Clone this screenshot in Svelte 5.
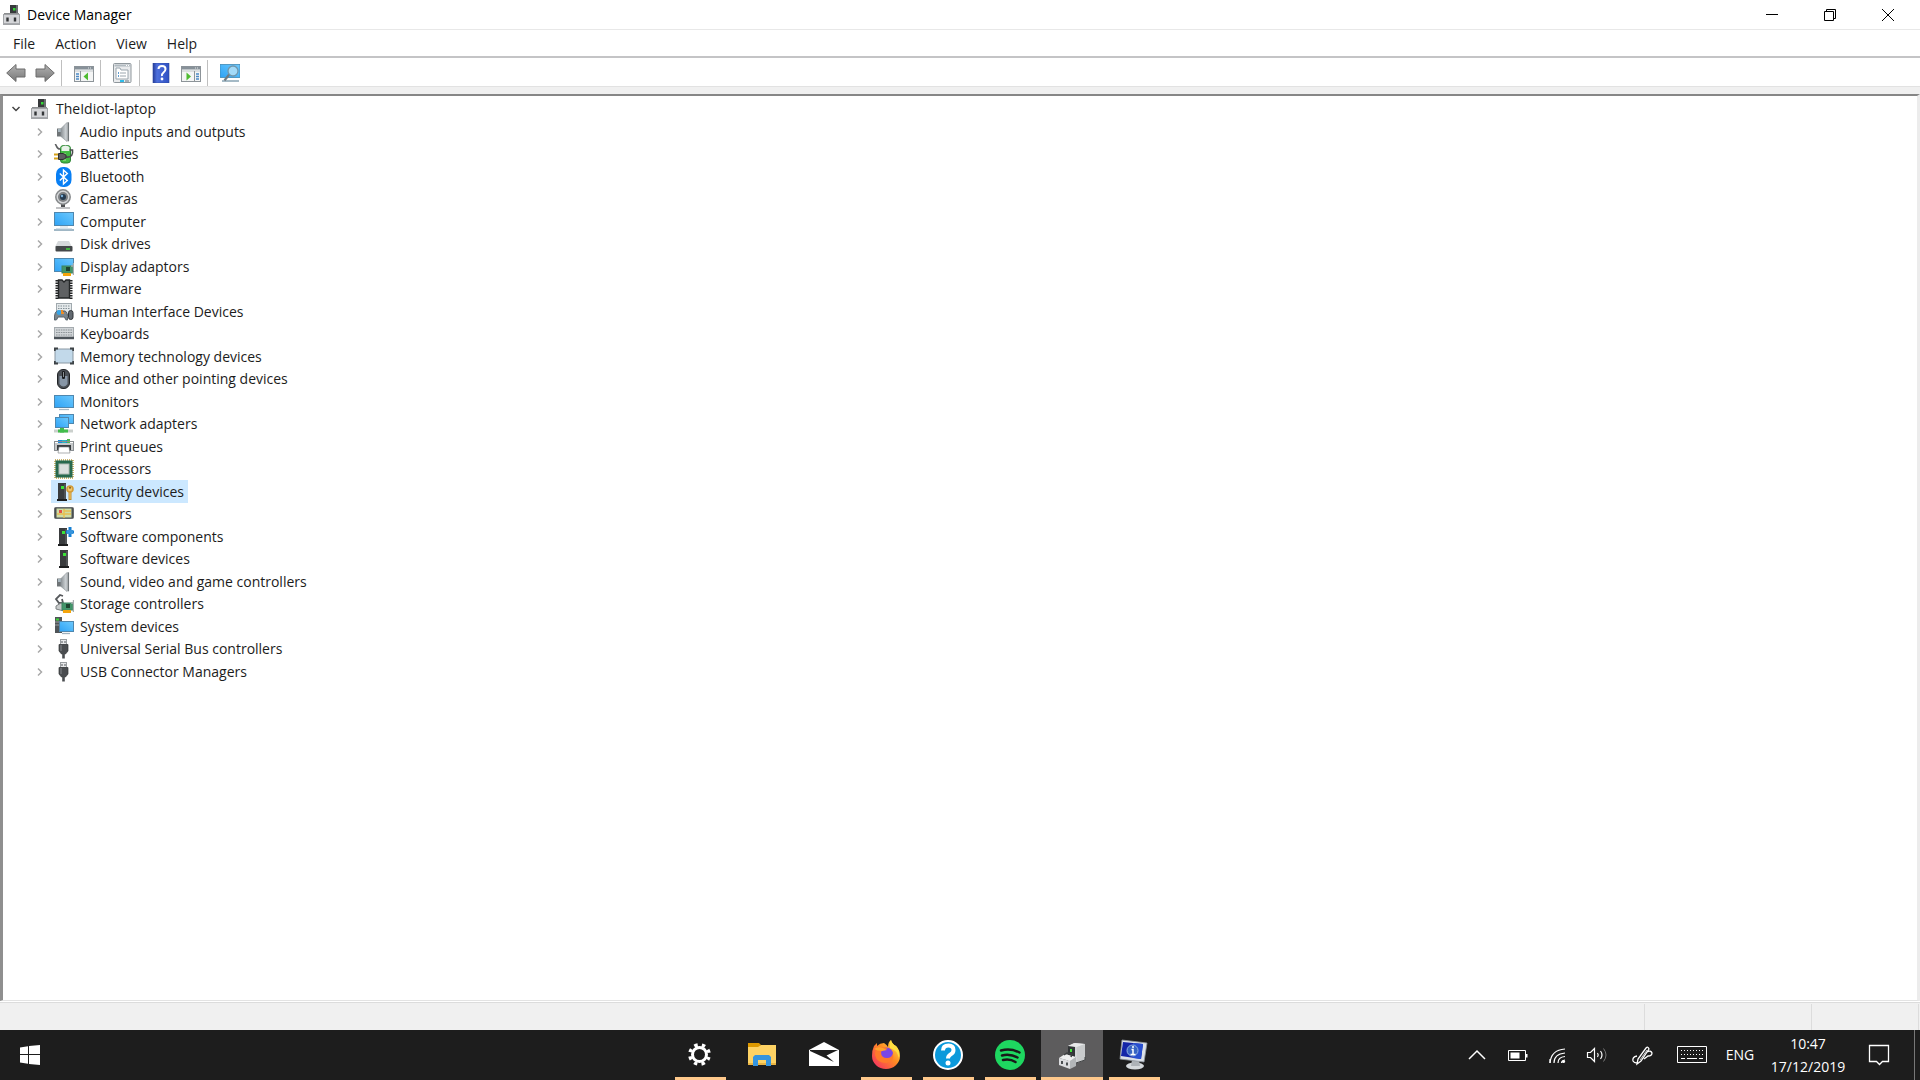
<script>
  const menus = ['File', 'Action', 'View', 'Help'];

  const devices = [
    ['Audio inputs and outputs', 'speaker'],
    ['Batteries', 'battery'],
    ['Bluetooth', 'bluetooth'],
    ['Cameras', 'camera'],
    ['Computer', 'computer'],
    ['Disk drives', 'disk'],
    ['Display adaptors', 'display'],
    ['Firmware', 'firmware'],
    ['Human Interface Devices', 'hid'],
    ['Keyboards', 'keyboard'],
    ['Memory technology devices', 'memory'],
    ['Mice and other pointing devices', 'mouse'],
    ['Monitors', 'monitor'],
    ['Network adapters', 'network'],
    ['Print queues', 'printer'],
    ['Processors', 'cpu'],
    ['Security devices', 'security'],
    ['Sensors', 'sensors'],
    ['Software components', 'component'],
    ['Software devices', 'software'],
    ['Sound, video and game controllers', 'speaker'],
    ['Storage controllers', 'storage'],
    ['System devices', 'system'],
    ['Universal Serial Bus controllers', 'usb'],
    ['USB Connector Managers', 'usb']
  ];

  const apps = [
    { name: 'Settings', icon: 'gear', open: true },
    { name: 'File Explorer', icon: 'folder' },
    { name: 'Mail', icon: 'mail' },
    { name: 'Firefox', icon: 'firefox', open: true },
    { name: 'Get Help', icon: 'question', open: true },
    { name: 'Spotify', icon: 'spotify', open: true },
    { name: 'Device Manager', icon: 'manager', open: true, active: true },
    { name: 'System Information', icon: 'sysinfo', open: true }
  ];

  let selected = $state('Security devices');
</script>

<svelte:head><title>Device Manager</title></svelte:head>

{#snippet screen(x, y, w, h)}
  <rect x={x + 0.5} y={y + 0.5} width={w - 1} height={h - 1} fill="url(#screenBlue)" stroke="#4f87ae" />
{/snippet}

{#snippet tower(x, y, h)}
  <rect {x} {y} width="8" height={h - 1} fill="#3a3c3e" />
  <rect x={x + 6} y={y + 1} width="2" height={h - 3} fill="#505355" />
  <rect x={x + 3} y={y + 3} width="3" height="3" fill="#3be337" />
  <rect x={x - 1} y={y + h - 2} width="10" height="2" fill="#1e1f20" />
{/snippet}

{#snippet board()}
  <rect x="8" y="9" width="11" height="7" fill="#42956a" stroke="#3c8460" />
  <rect x="12" y="10" width="4" height="4" fill="#1d4430" />
  <path d="M19.500 6v12M17 9h3" stroke="#a7adb0" stroke-width="1.400" />
  <path d="M9 17.500h8" stroke="#f4a40c" stroke-width="3" />
{/snippet}

{#snippet icon(name)}
  <svg class="icon" viewBox="0 0 20 20" aria-hidden="true">
    {#if name === 'root'}
      <rect x="7" y="0" width="8" height="11" fill="#37393b" />
      <rect x="13" y="0" width="2" height="11" fill="#6b6e70" />
      <rect x="10" y="3" width="2.500" height="2.500" fill="#35d838" />
      <path d="M1 8h15v3H1z" fill="#8c8e90" />
      <rect x="0.500" y="9.500" width="16" height="10" fill="#d4d5d8" stroke="#a2a4a7" />
      <path d="M4.500 12.500v4M12 12.500v4" stroke="#343638" stroke-width="2.400" />
      <path d="M1 18.500h15" stroke="#a8aaae" />
    {:else if name === 'speaker'}
      <path d="M3 6.500h5v8H3z" fill="#6f7477" />
      <path d="M4 7h3v3H4z" fill="#a7b5bd" />
      <path d="M7 6.500 13 .5v19l-6-5z" fill="url(#metal)" stroke="#92999e" stroke-width=".7" />
      <path d="M14.300.300v19" stroke="#707679" stroke-width="1.500" />
    {:else if name === 'battery'}
      <rect x="6.500" y="1.500" width="10" height="17.500" rx="3" fill="#43b944" stroke="#2c8233" />
      <path d="M7.500 3q4-3 8 0v4h-8z" fill="#e9f2e9" />
      <path d="M9 9h3v8H9z" fill="#7ad06d" />
      <path d="M1 0c2 1 1 5 5 5" fill="none" stroke="#5c5e60" stroke-width="1.500" />
      <path d="M12 13c6 1 7-3 6.500-7h-3" fill="none" stroke="#4a4c4e" stroke-width="1.600" />
      <path d="M4.500 9.500H9l3 1.500v3l-3 1.500H4.500z" fill="#5c5e60" stroke="#2e3032" />
      <path d="M0 10.500h4M0 14.500h4" stroke="#d6a21b" stroke-width="2" />
    {:else if name === 'bluetooth'}
      <rect x="2" y="0" width="15.500" height="20" rx="7" fill="#087ff4" />
      <path d="m5.800 6.500 7.500 7-3.800 3.500V3l3.800 3.500-7.500 7" fill="none" stroke="#fff" stroke-width="1.400" />
    {:else if name === 'camera'}
      <path d="M9 15v3" stroke="#4e5052" stroke-width="4" />
      <path d="M2 19h14" stroke="#abadaf" stroke-width="1.500" />
      <circle cx="9" cy="8" r="7.200" fill="#d4d6d8" stroke="#85888a" stroke-width="1.500" />
      <circle cx="9" cy="8" r="5" fill="#7d8083" />
      <circle cx="9" cy="8" r="3" fill="#243a50" />
      <circle cx="8" cy="7" r="1.200" fill="#7cb2dc" />
    {:else if name === 'computer'}
      {@render screen(0, 0, 20, 14)}
      <path d="M6 14.500h8v1H6z" fill="#cad6df" />
      <path d="M0 18h20" stroke="#89a5b7" stroke-width="1.600" />
      <path d="M2 16.700h16" stroke="#c9dbe5" />
    {:else if name === 'disk'}
      <path d="m4 7h11l3 6H1z" fill="#d6d9db" />
      <rect x="1.500" y="12" width="17" height="5.500" rx="1" fill="#45484a" />
      <path d="M12 15h4" stroke="#42d33e" stroke-width="1.500" />
    {:else if name === 'display'}
      {@render screen(0, 1, 20, 14)}
      {@render board()}
    {:else if name === 'firmware'}
      <path d="M3 1v19M17 1v19" stroke="#212324" stroke-width="3" stroke-dasharray="1.500 1" />
      <path d="M4.500 1H8l2 2 2-2h3.500v18h-11z" fill="#5f6163" stroke="#252728" stroke-width="1.400" />
    {:else if name === 'hid'}
      <rect x="2.500" y="1.500" width="15" height="11" fill="#e4e9eb" stroke="#a0a9ae" />
      <path d="M4 4h12M4 6.500h12" stroke="#849096" stroke-dasharray="1.500 1" />
      <path d="M4 9h7q3 1 2.500 9-2 1-3-3H4q-1 4-3.500 3Q0 9 4 9z" fill="#7b878e" stroke="#58626a" />
      <circle cx="5" cy="10.500" r="2.400" fill="#38a5e7" />
      <path d="M8 8v3h2" stroke="#ed8d27" stroke-width="2" />
      <rect x="14.500" y="8.500" width="4.500" height="9" rx="2.200" fill="#626970" stroke="#303438" />
    {:else if name === 'keyboard'}
      <rect x="0.500" y="3.500" width="19" height="10" fill="#d1d5d8" stroke="#a5abaf" />
      <path d="M2 6h16M2 8.500h16M2 11h16" stroke="#8c9397" stroke-dasharray="1.600 .8" />
      <path d="M0 14h20" stroke="#4c5359" stroke-width="2.500" />
    {:else if name === 'memory'}
      <rect x="1" y="2" width="18" height="14" rx="1" fill="#c2d9ea" stroke="#8a98a3" />
      <path d="M.7 4V1.500H4M16 1.500h3.300V4M.7 14v2.500H4M16 16.500h3.300V14" fill="none" stroke="#3d4246" stroke-width="2" />
    {:else if name === 'mouse'}
      <rect x="3.500" y="0.500" width="12" height="19" rx="5.500" fill="#4b5056" stroke="#202326" />
      <path d="M5.500 7v8q4 5 8 0V7" fill="#8796a6" />
      <rect x="8" y="2" width="3" height="8" rx="1.300" fill="#191b1d" />
      <path d="M9.500 3v5" stroke="#8a9094" />
    {:else if name === 'monitor'}
      {@render screen(0, 3, 20, 13)}
      <path d="M5 17.500h10" stroke="#a8b9c4" stroke-width="1.300" />
    {:else if name === 'network'}
      {@render screen(5, 0, 15, 10)}
      {@render screen(1, 3, 14, 11)}
      <path d="M0 17h19" stroke="#cbd0cd" stroke-width="3" />
      <path d="M8 14v4.500" stroke="#41bd4b" stroke-width="4" />
      <path d="M4 17h10" stroke="#41bd4b" stroke-width="3" />
    {:else if name === 'printer'}
      <path d="M4 3h12v5H4z" fill="#188ae0" />
      <path d="M8 3h4v5H8z" fill="#28bac1" />
      <path d="M13 2h3v5h-3z" fill="#51b950" />
      <rect x="0.500" y="4.500" width="19" height="9" fill="none" stroke="#898e92" />
      <path d="M1 6h18v7H1z" fill="#c5c8ca" />
      <path d="M3 8h14v5H3z" fill="#3a3e41" />
      <path d="M5 10h10l1 6H4z" fill="#fff" stroke="#777b7e" stroke-width=".6" />
    {:else if name === 'cpu'}
      <rect x="1" y="1" width="18" height="18" fill="none" stroke="#cbb46b" stroke-width="2" stroke-dasharray="1 1" />
      <rect x="1.500" y="1.500" width="17" height="17" fill="#28694e" />
      <rect x="5" y="5" width="10" height="10" fill="#dce0de" stroke="#b0bbb3" />
    {:else if name === 'security'}
      {@render tower(4, 1, 18)}
      <path d="M16 8v10" stroke="#c08c2c" stroke-width="3" />
      <path d="M16 8v9" stroke="#e7b652" stroke-width="1.600" />
      <circle cx="16" cy="7" r="3" fill="#f0c66b" stroke="#d39b38" stroke-width="1.600" />
      <circle cx="16" cy="5.800" r="1" fill="#865f1e" />
    {:else if name === 'sensors'}
      <rect x="0.500" y="3.500" width="19" height="11" rx="1" fill="#4b4e50" stroke="#686c6f" />
      <rect x="2.500" y="4.500" width="15" height="9" fill="#cedca8" />
      <path d="M3 10h14M10 5v9M10 7h7" stroke="#e8bf50" stroke-width="1.400" />
      <path d="M5 6h3v3H5z" fill="#e45249" />
    {:else if name === 'component'}
      {@render tower(5, 1, 18)}
      <path d="M16 0v10M12 5h8" stroke="#1680d4" stroke-width="3" />
      <path d="M13 3h6v4h-6z" fill="#3794db" />
    {:else if name === 'software'}
      {@render tower(6, 1, 18)}
    {:else if name === 'storage'}
      <path d="M9 2 6 1 2 5l3 4h4L8 5" fill="none" stroke="#56595c" stroke-width="1.800" />
      <path d="m2 12 5-3 6 2-3 6-8-2z" fill="#c7caca" stroke="#7d8283" />
      {@render board()}
    {:else if name === 'system'}
      <path d="M1 0h7v16H1z" fill="#505558" />
      <path d="M1 5h7M1 8h7" stroke="#9ba0a2" />
      <rect x="2" y="1.500" width="3" height="2" fill="#3bd636" />
      {@render screen(5, 4, 15, 11)}
      <path d="M8 16.500h8" stroke="#9fb1be" stroke-width="1.300" />
    {:else if name === 'usb'}
      <rect x="6.500" y="0.500" width="6" height="5" fill="#e7e8e9" stroke="#999da0" />
      <path d="M8 2v2M11 2v2" stroke="#53575a" />
      <path d="M5 5.500h9V12l-2.500 3h-4L5 12z" fill="#4a4d50" stroke="#343638" stroke-width=".7" />
      <path d="M7 6v6" stroke="#85898c" />
      <path d="M9.500 14v5.500" stroke="#4a4d50" stroke-width="2.600" />
    {/if}
  </svg>
{/snippet}

{#snippet toolPanel(forward)}
  <svg class="icon" viewBox="0 0 20 20" aria-hidden="true">
    <rect x="0.500" y="3.500" width="19" height="15" fill="#f4f5f5" stroke="#8d9499" />
    <path d="M1 5h18" stroke="#879199" stroke-width="3" />
    <path d="M14 5h4" stroke="#e2e6e8" stroke-dasharray="1 1" />
    <path d="M1 8h18" stroke="#c3c8cc" />
    {#if forward}
      <path d="M13.500 8v10" stroke="#8d9499" />
      <path d="M15 11h3M15 13.500h3M15 16h3" stroke="#4b89c5" stroke-width="1.300" />
      <path d="m5.500 9.500 4.500 4-4.500 4z" fill="#4fbc32" />
    {:else}
      <path d="M6.500 8v10" stroke="#8d9499" />
      <path d="M2 11h3M2 13.500h3M2 16h3" stroke="#4b89c5" stroke-width="1.300" />
      <path d="m14 9.500-4.500 4 4.500 4z" fill="#4fbc32" />
    {/if}
  </svg>
{/snippet}

{#snippet appIcon(name)}
  <svg class="app-icon" viewBox="0 0 32 32" aria-hidden="true">
    {#if name === 'gear'}
      <circle cx="15.500" cy="15.500" r="9.700" fill="none" stroke="#fff" stroke-width="3.400" stroke-dasharray="3.500 4.118" stroke-dashoffset="1.750" transform="rotate(22.500 15.500 15.500)" />
      <circle cx="15.500" cy="15.500" r="7" fill="none" stroke="#fff" stroke-width="3" />
    {:else if name === 'folder'}
      <path d="M2 4h11l2 2-2 3H2z" fill="#dc9800" />
      <path d="M2 8h10l3-2h15v20H2z" fill="#fdd264" />
      <path d="M2 24h28v2H2z" fill="#e9b443" />
      <path d="M9 16h14l2 2v9h-5v-6h-8v6H7v-9z" fill="#3494df" />
    {:else if name === 'mail'}
      <path d="M1 11 16 3l15 8v16H1z" fill="#fff" />
      <path d="M2 11h28L18.500 16.500 26 23 2 12z" fill="#1d1d1d" />
    {:else if name === 'firefox'}
      <path d="M4 7 7 4v3q3-3 7-3 3 2 4 4Q18 3 21 1q1 4 5 6 4 4 4 10A14 13 0 0 1 2 17Q2 11 4 7z" fill="url(#fox)" />
      <circle cx="16.500" cy="15" r="6.500" fill="#7946e8" />
      <path d="M10 9q4-2 8 1-5 0-7 3 0 6 6 6 5 0 6-5 2 9-7 10-9 0-11-8Q5 9 10 9z" fill="#ff7a2b" />
      <path d="M21 1q1 4 5 6 4 4 3 12-2-8-9-10-1-5 1-8z" fill="#ffdf40" />
      <path d="M4 10q4-3 9-1l4 2-5 1q-5 0-8-2z" fill="#ffa22c" />
    {:else if name === 'question'}
      <circle cx="16" cy="16" r="14" fill="#0b99db" stroke="#fff" stroke-width="2" />
      <path d="M11 11.500q0-5 5.500-5 5 0 5 4.500 0 3-3 4.500-2.500 1.500-2.500 4" fill="none" stroke="#fff" stroke-width="4" />
      <circle cx="16" cy="24" r="2.500" fill="#fff" />
    {:else if name === 'spotify'}
      <circle cx="16" cy="16" r="15" fill="#1ed760" />
      <path d="M7 11.500q10-2.500 18.500 2M8 16.500q8-2 15.500 2M9 21q7-1.500 12.500 2" fill="none" stroke="#191919" stroke-width="2.500" stroke-linecap="round" />
    {:else if name === 'manager'}
      <path d="m12 7 6-3 11 1v16l-9 3-8-2z" fill="#d2d4d5" />
      <path d="m12 7 7-3 10 1-8 3z" fill="#e8e9e9" />
      <path d="m21 8 8-3v16l-8 3z" fill="#c9cbcc" />
      <path d="m12 7 7 1v10l-7-1z" fill="#323537" />
      <path d="M14 10h2v3h-2z" fill="#42e039" />
      <path d="m20 24 9-3v-3" fill="none" stroke="#434647" />
      <path d="m3 19 6-4 11 3-6 4z" fill="#efefef" />
      <path d="m3 19 11 3v8L3 26z" fill="#dcdddf" />
      <path d="m14 22 6-4v9l-6 3z" fill="#b3b6b8" />
      <path d="M6 22v3M11 23.500v3" stroke="#4d5052" stroke-width="2" />
      <path d="m8 16 3-2 5 1-1 3" fill="none" stroke="#3c3f40" stroke-width="1.500" />
    {:else if name === 'sysinfo'}
      <ellipse cx="17" cy="27" rx="9" ry="3.500" fill="#d5d9dc" />
      <path d="M14 21h7l1 6h-9z" fill="#aeb3b8" />
      <path d="m4 1 25 3-3 19-24-3z" fill="#dce1e8" stroke="#8e959d" stroke-width=".8" />
      <path d="m5 3 20 2-2 15-20-3z" fill="#1426a8" />
      <path d="m15 4 10 1-2 15-8-1z" fill="#274fd0" />
      <circle cx="14.500" cy="11.500" r="5.500" fill="#3764c2" stroke="#8fafe1" />
      <path d="M13.500 10.500H15v5M12.500 15.500h5M15 7v2" fill="none" stroke="#fff" stroke-width="1.500" />
    {/if}
  </svg>
{/snippet}

<svg class="defs" aria-hidden="true">
  <defs>
    <linearGradient id="screenBlue" x1="0" y1="1" x2="1" y2="0">
      <stop offset="0" stop-color="#2fa2f5" />
      <stop offset=".55" stop-color="#4fb8fa" />
      <stop offset="1" stop-color="#6fc8fc" />
    </linearGradient>
    <linearGradient id="metal">
      <stop offset="0" stop-color="#8b9296" />
      <stop offset="1" stop-color="#dde1e4" />
    </linearGradient>
    <linearGradient id="fox" x1="1" y1="0" x2="0" y2="1">
      <stop offset="0" stop-color="#fff04b" />
      <stop offset=".45" stop-color="#ff8b22" />
      <stop offset="1" stop-color="#f4236c" />
    </linearGradient>
    <linearGradient id="arrowGray" x1="0" y1="0" x2="0" y2="1">
      <stop offset="0" stop-color="#b2b2b2" />
      <stop offset="1" stop-color="#777" />
    </linearGradient>
    <linearGradient id="bookBlue">
      <stop offset="0" stop-color="#263d9c" />
      <stop offset=".25" stop-color="#4d6fdc" />
      <stop offset="1" stop-color="#2f51c3" />
    </linearGradient>
  </defs>
</svg>

<div class="desktop">
  <main class="window">
    <header class="title-bar">
      {@render icon('root')}
      <h1>Device Manager</h1>
      <div class="window-buttons">
        <button aria-label="Minimise"><svg viewBox="0 0 12 12"><path d="M0 5.500h12" /></svg></button>
        <button aria-label="Restore"><svg viewBox="0 0 12 12"><path d="M.5 2.500h9v9h-9zM2.500 2.500v-2h9v9h-2" /></svg></button>
        <button aria-label="Close"><svg viewBox="0 0 12 12"><path d="m0 0 12 12M12 0 0 12" /></svg></button>
      </div>
    </header>

    <nav class="menu-bar" aria-label="Menu">
      {#each menus as menu}
        <button>{menu}</button>
      {/each}
    </nav>

    <div class="toolbar" role="toolbar" aria-label="Tools">
      <button aria-label="Back">
        <svg class="icon" viewBox="0 0 20 20"><path d="M.7 10 10 1.500V6h9v8h-9v4.500z" fill="url(#arrowGray)" stroke="#6d6d6d" /></svg>
      </button>
      <button aria-label="Forward">
        <svg class="icon" viewBox="0 0 20 20"><path d="M19.300 10 10 1.500V6H1v8h9v4.500z" fill="url(#arrowGray)" stroke="#6d6d6d" /></svg>
      </button>
      <span class="separator"></span>
      <button aria-label="Show console tree">{@render toolPanel(false)}</button>
      <span class="separator"></span>
      <button aria-label="Properties">
        <svg class="icon" viewBox="0 0 20 20">
          <rect x="0.500" y=".5" width="17.500" height="19" rx="1" fill="#e9ebed" stroke="#8f979c" />
          <path d="M1.500 2.500h16" stroke="#b2bbc1" stroke-width="2" />
          <path d="M13 2.500h3" stroke="#fff" stroke-dasharray="1 1" />
          <path d="M3 5h4l1 2h7v9H3z" fill="#fff" stroke="#9aa5ad" />
          <path d="M5 10h1M5 13h1" stroke="#2d7cc0" stroke-width="1.500" />
          <path d="M7 10h6M7 13h6" stroke="#9ba6ae" />
          <path d="M7 18h4" stroke="#2ebbe8" stroke-width="2" />
          <path d="M12 18h4" stroke="#a8b0b5" stroke-width="2" />
        </svg>
      </button>
      <span class="separator"></span>
      <button aria-label="Help">
        <svg class="icon" viewBox="0 0 20 20">
          <rect x="1" y="0" width="16" height="20" fill="url(#bookBlue)" stroke="#2d469c" stroke-width=".6" />
          <path d="M6.500 6q0-3 3.500-3t3.500 3q0 2-2 3.500T10 13" fill="none" stroke="#fff" stroke-width="2" />
          <circle cx="10" cy="16" r="1.400" fill="#fff" />
        </svg>
      </button>
      <button aria-label="Show action pane">{@render toolPanel(true)}</button>
      <span class="separator"></span>
      <button aria-label="Scan for hardware changes">
        <svg class="icon" viewBox="0 0 20 20">
          <rect x="0" y="1.500" width="20" height="13" fill="url(#screenBlue)" stroke="#4089b4" stroke-width=".8" />
          <path d="M2 18h17" stroke="#8fa9b8" stroke-width="1.600" />
          <path d="m9.500 11-5 6.500" stroke="#707b83" stroke-width="2.200" />
          <circle cx="13" cy="8" r="5" fill="#a3daf8" stroke="#7197ac" stroke-width="1.300" />
        </svg>
      </button>
    </div>

    <section class="tree-pane">
      <ul class="tree" aria-label="Devices">
        <li class="row root">
          <button class="chevron" aria-label="Collapse TheIdiot-laptop">
            <svg viewBox="0 0 10 10"><path d="m1.500 3 3.500 3.500L8.500 3" stroke="#444" /></svg>
          </button>
          <button class="item">{@render icon('root')}<span>TheIdiot-laptop</span></button>
        </li>
        {#each devices as [name, glyph]}
          <li class="row">
            <button class="chevron" aria-label={`Expand ${name}`}>
              <svg viewBox="0 0 10 10"><path d="m3 1.500 3.500 3.500L3 8.500" stroke="#a9a9a9" /></svg>
            </button>
            <button class="item" class:selected={name === selected} onclick={() => (selected = name)}>
              {@render icon(glyph)}<span>{name}</span>
            </button>
          </li>
        {/each}
      </ul>
    </section>

    <footer class="status-bar"><span></span><span></span><span></span></footer>
  </main>

  <nav class="taskbar" aria-label="Taskbar">
    <button class="start" aria-label="Start">
      <svg viewBox="0 0 20 20"><path d="M0 2.500 8 1.300V9H0zM9 1.100 20 0v9H9zM0 10h8v8.700L0 17.500zM9 10h11v10L9 18.900z" fill="#fff" /></svg>
    </button>
    <span class="space-before"></span>
    <div class="apps">
      {#each apps as app}
        <button class="app" class:open={app.open} class:active={app.active} aria-label={app.name}>
          {@render appIcon(app.icon)}
        </button>
      {/each}
    </div>
    <span class="space-after"></span>
    <div class="tray">
      <button aria-label="Show hidden icons">
        <svg viewBox="0 0 24 24"><path d="m4 16 8-8 8 8" stroke-width="1.500" /></svg>
      </button>
      <button aria-label="Battery">
        <svg viewBox="0 0 24 24"><path d="M3.500 7.500h17v10h-17z" /><path d="M5.500 9.500h9v6h-9z" fill="#fff" stroke="none" /><path d="M21.500 11v3.500" stroke-width="2" /></svg>
      </button>
      <button aria-label="Network">
        <svg viewBox="0 0 24 24"><path d="M5 20Q6 7 20 6M9 20q0-9 11-10M13 20q0-6 7-6.500" stroke-width="1.200" /><path d="M5 20v-4M16.500 20q0-2.500 3.500-3" stroke-width="1.200" /><circle cx="18.500" cy="18.500" r="1.600" fill="#fff" stroke="none" /></svg>
      </button>
      <button aria-label="Volume">
        <svg viewBox="0 0 24 24"><path d="M2.500 9.500h3l4-4v13l-4-4h-3zM12.500 10q1.500 2 0 4M15.500 8q3 4 0 8" stroke-width="1.200" /><path d="M18.500 5.500q5 6.500 0 13" stroke="#777" /></svg>
      </button>
      <button class="wide" aria-label="Windows Ink Workspace">
        <svg viewBox="0 0 24 24"><path d="m7 21 1-5 8-11q2-2 3 1l-8 12zM7 13q-5 1-4 5 1 2 4 2M17 9q4-2 5 1 0 3-4 3l-4 3" stroke-width="1.300" /><path d="m10 17 7-10" stroke-width=".8" /></svg>
      </button>
      <button class="wide" aria-label="Touch keyboard">
        <svg class="keys" viewBox="0 0 30 18"><path d="M.5.5h29v16H.5z" /><path d="M4 4.500h23M4 8.500h23" stroke-dasharray="1 2" /><path d="M4 12.500h4M10 12.500h10M22 12.500h4" /></svg>
      </button>
      <button class="language">ENG</button>
      <button class="clock"><time datetime="10:47">10:47</time><time datetime="2019-12-17">17/12/2019</time></button>
      <button class="notifications" aria-label="Notifications">
        <svg viewBox="0 0 24 24"><path d="M2.500 2.500h19v16h-6l-3 3-3-3h-7z" stroke-width="1.300" /></svg>
      </button>
      <button class="show-desktop" aria-label="Show desktop"></button>
    </div>
  </nav>
</div>

<style>
  :global(body) {
    margin: 0;
  }

  .defs {
    position: absolute;
    width: 0;
    height: 0;
  }

  .desktop {
    display: flex;
    flex-direction: column;
    min-height: 100vh;
    font-family: 'Open Sans', 'Noto Sans', sans-serif;
    font-size: 14px;
    line-height: 20px;
    color: #1c1c1c;
    background: #fff;
  }

  button {
    display: flex;
    align-items: center;
    justify-content: center;
    padding: 0;
    border: 0;
    background: none;
    color: inherit;
    font: inherit;
  }

  .icon {
    display: block;
    flex: none;
    width: 20px;
    height: 20px;
  }

  .window {
    display: flex;
    flex: 1;
    flex-direction: column;
  }

  .title-bar {
    display: flex;
    align-items: center;
    height: 29px;
    padding: 0 3px;
    border-bottom: 1px solid #e8e8e8;
  }

  h1 {
    margin: 0 0 0 4px;
    color: #000;
    font-size: 14px;
    font-weight: 400;
  }

  .window-buttons {
    display: flex;
    align-self: stretch;
    margin-left: auto;
  }

  .window-buttons button {
    width: 58px;
  }

  .window-buttons svg {
    width: 12px;
    height: 12px;
    fill: none;
    stroke: #000;
    stroke-width: 1;
  }

  .menu-bar {
    display: flex;
    gap: 20px;
    height: 25px;
    padding: 1px 13px 0;
    border-bottom: 2px solid #c4c4c6;
  }

  .toolbar {
    display: flex;
    align-items: center;
    gap: 9px;
    height: 26px;
    padding: 2px 6px 0;
    border-bottom: 1px solid #e2e2e2;
  }

  .separator {
    width: 1px;
    height: 26px;
    margin: 0 3px 0 -3px;
    background: #bfbfbf;
  }

  .tree-pane {
    flex: 1;
    border: solid;
    border-width: 2px 3px 1px 3px;
    border-color: #868686 #ececec #e3e3e3 #8f8f8f;
    box-shadow: 0 -7px #f0f0f0;
    margin-top: 7px;
  }

  .tree {
    margin: 0;
    padding: 2px 0 0 3px;
    list-style: none;
  }

  .row {
    display: flex;
    height: 22px;
    padding-left: 24px;
  }

  .row:nth-child(even) {
    height: 23px;
  }

  .root {
    padding-left: 0;
  }

  .chevron {
    width: 20px;
  }

  .chevron svg {
    width: 10px;
    height: 10px;
    fill: none;
    stroke-width: 1.500;
  }

  .item {
    gap: 6px;
    padding: 0 4px 0 3px;
    margin-left: 1px;
  }

  .root .item {
    gap: 5px;
    padding-left: 4px;
  }

  .selected {
    background: #cce8ff;
  }

  .status-bar {
    display: grid;
    grid-template-columns: 1fr 167px 107px;
    height: 26px;
    margin-top: 1px;
    padding: 1px 1px 0 0;
    border-top: 1px solid #dcdcdc;
    background: #f0f0f0;
  }

  .status-bar span {
    border-right: 1px solid #dcdcdc;
  }

  .taskbar {
    display: flex;
    height: 50px;
    background: #1d1d1d;
    color: #fff;
  }

  .start {
    width: 60px;
  }

  .start svg {
    width: 20px;
    height: 20px;
  }

  .space-before {
    flex: 609;
  }

  .space-after {
    flex: 292;
  }

  .apps {
    display: flex;
  }

  .app {
    position: relative;
    width: 62px;
  }

  .app-icon {
    width: 32px;
    height: 32px;
  }

  .active {
    background: #5d5c5d;
  }

  .open::after {
    content: '';
    position: absolute;
    right: 5px;
    bottom: 0;
    left: 6px;
    height: 3px;
    background: #fec88b;
  }

  .active::after {
    right: 0;
    left: 0;
  }

  .tray {
    display: flex;
  }

  .tray button {
    width: 40px;
  }

  .tray .wide {
    width: 50px;
  }

  .tray svg {
    width: 24px;
    height: 24px;
    fill: none;
    stroke: #fff;
  }

  .tray .keys {
    width: 30px;
    height: 18px;
  }

  .tray .language {
    width: 46px;
  }

  .tray .clock {
    flex-direction: column;
    gap: 3px;
    width: 90px;
  }

  .tray .notifications {
    width: 52px;
  }

  .tray .show-desktop {
    width: 6px;
    margin-left: 9px;
    border-left: 1px solid #777;
  }
</style>
